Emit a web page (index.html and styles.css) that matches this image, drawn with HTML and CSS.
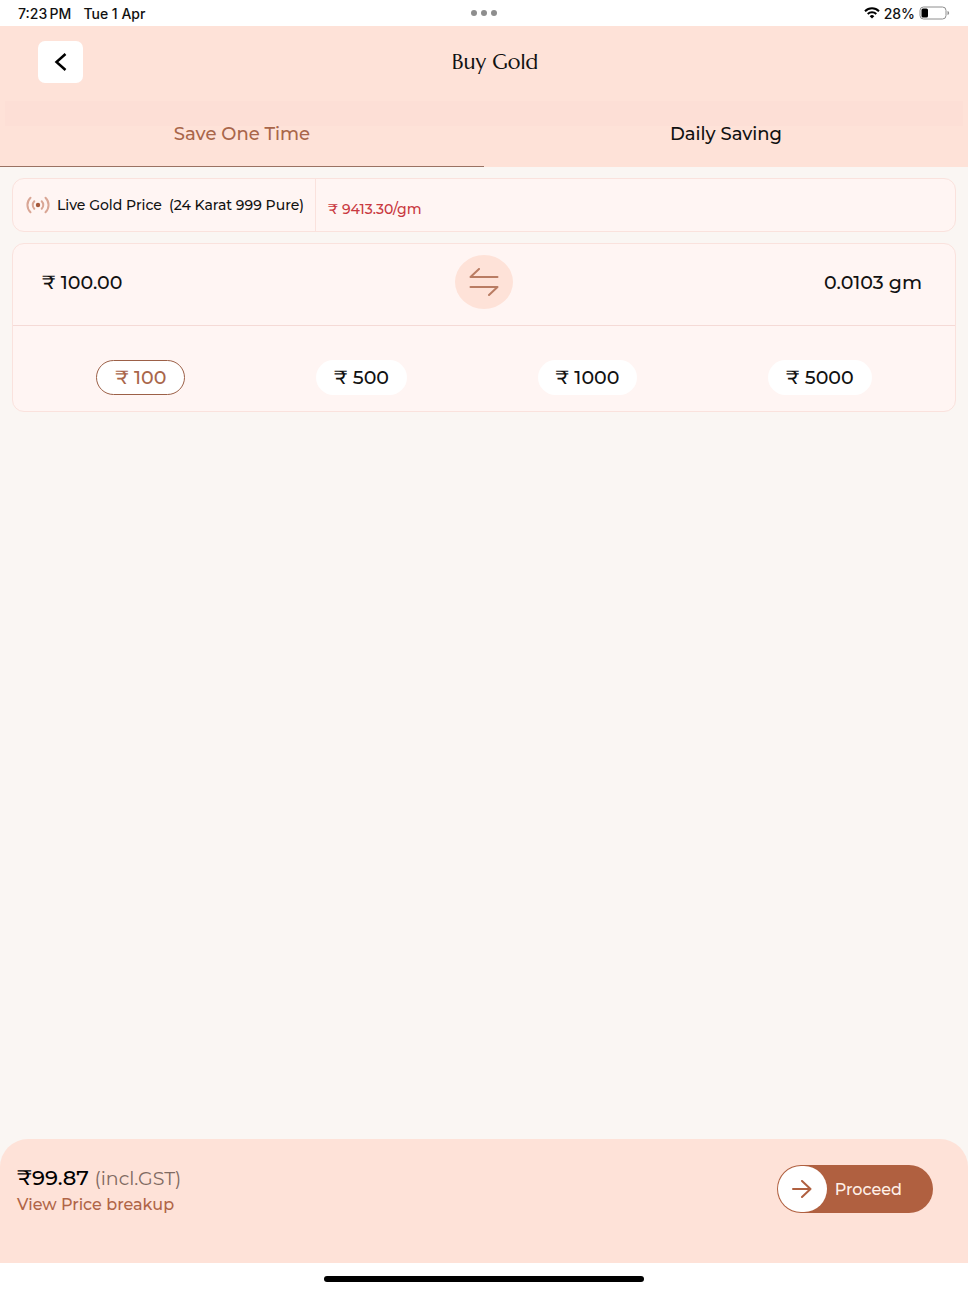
FILE: index.html
```html
<!DOCTYPE html>
<html lang="en">
<head>
  <meta charset="UTF-8">
  <meta name="viewport" content="width=device-width, initial-scale=1">
  <title>Buy Gold</title>
  <link rel="stylesheet" href="styles.css">
</head>
<body>
  <div class="status">
    <div class="status-left">
      <span>7:23&#8201;PM</span>
      <span>Tue 1 Apr</span>
    </div>
    <div class="dots"><i></i><i></i><i></i></div>
    <div class="status-right">
      <svg width="16" height="12" viewBox="0 0 16 12" fill="none" stroke="#000" stroke-width="2">
        <path d="M1 4.2a10 10 0 0 1 14 0"/>
        <path d="M3.7 7a6.2 6.2 0 0 1 8.6 0"/>
        <path d="M8 11.6 5.7 9.2a3.3 3.3 0 0 1 4.6 0z" fill="#000" stroke="none"/>
      </svg>
      <span>28%</span>
      <svg width="31" height="14" viewBox="0 0 31 14">
        <rect x="1" y="1" width="26" height="12" rx="3.5" fill="none" stroke="#8e8e8e"/>
        <rect x="2.5" y="2.5" width="6.5" height="9" rx="1.5" fill="#000"/>
        <path d="M28.5 5v4c1-.3 1.6-1.1 1.6-2s-.6-1.7-1.6-2z" fill="#8e8e8e"/>
      </svg>
    </div>
  </div>

  <header class="header">
    <button type="button" class="back" aria-label="Back">
      <svg width="14" height="20" viewBox="0 0 14 20" fill="none" stroke="#000" stroke-width="2.5">
        <path d="M11.5 2 2.5 10l9 8"/>
      </svg>
    </button>
    <h1>Buy Gold</h1>
  </header>

  <nav class="tabs">
    <button type="button" class="tab active">Save One Time</button>
    <button type="button" class="tab">Daily Saving</button>
  </nav>

  <main class="content">
    <section class="card live">
      <div class="live-label">
        <svg width="24" height="18" viewBox="0 0 24 18" fill="none" stroke="#d9a695" stroke-width="2" stroke-linecap="round">
          <circle cx="12" cy="9" r="2.2" fill="#a4593c" stroke="none"/>
          <path d="M8.3 5.2a5.4 5.4 0 0 0 0 7.6M15.7 5.2a5.4 5.4 0 0 1 0 7.6"/>
          <path d="M4.5 1.8a10 10 0 0 0 0 14.4M19.5 1.8a10 10 0 0 1 0 14.4"/>
        </svg>
        <span>Live Gold Price</span>
        <span>(24 Karat 999 Pure)</span>
      </div>
      <div class="live-price">₹ 9413.30/gm</div>
    </section>

    <section class="card">
      <div class="convert">
        <span>₹ 100.00</span>
        <button type="button" class="swap" aria-label="Swap">
          <svg width="30" height="28" viewBox="0 0 30 28" fill="none" stroke="#b97c63" stroke-width="2" stroke-linecap="round" stroke-linejoin="round">
            <path d="M28.5 9H1.5L10 1"/>
            <path d="M1.5 19h27L20 27"/>
          </svg>
        </button>
        <span class="grams">0.0103 gm</span>
      </div>
      <div class="amounts">
        <button type="button" class="amount selected">₹ 100</button>
        <button type="button" class="amount">₹ 500</button>
        <button type="button" class="amount">₹ 1000</button>
        <button type="button" class="amount">₹ 5000</button>
      </div>
    </section>
  </main>

  <footer class="footer">
    <div>
      <p class="total">₹99.87 <span>(incl.GST)</span></p>
      <a href="#" class="breakup">View Price breakup</a>
    </div>
    <button type="button" class="proceed">
      <span class="knob">
        <svg width="20" height="18" viewBox="0 0 20 18" fill="none" stroke="#b06040" stroke-width="2" stroke-linecap="round" stroke-linejoin="round">
          <path d="M1 9h17.5M10 1l8.500 8-8.500 8"/>
        </svg>
      </span>
      Proceed
    </button>
  </footer>
  <div class="home"><div class="home-bar"></div></div>
</body>
</html>
```
FILE: styles.css
```css
* {
  box-sizing: border-box;
}
body {
  display: flex;
  flex-direction: column;
  min-height: 100vh;
  margin: 0;
  background: #faf6f3;
  color: #111;
  font-family: Montserrat, Inter, sans-serif;
  font-weight: 500;
}
button {
  padding: 0;
  border: none;
  background: none;
  color: inherit;
  font: inherit;
  cursor: pointer;
}
.status {
  display: grid;
  grid-template-columns: 1fr auto 1fr;
  align-items: center;
  height: 26px;
  padding: 0 18px;
  background: #fff;
  font-family: Inter, sans-serif;
  font-size: 14px;
}
.status-left {
  display: flex;
  gap: 12px;
}
.status-right {
  display: flex;
  align-items: center;
  justify-content: flex-end;
  gap: 4px;
}
.dots {
  display: flex;
  gap: 4px;
}
.dots i {
  width: 6px;
  height: 6px;
  border-radius: 50%;
  background: #8e8e8e;
}
.header {
  display: grid;
  grid-template-columns: 1fr auto 1fr;
  align-items: center;
  height: 75px;
  padding: 0 16px 4px 38px;
  background: #fee2d8;
}
.back {
  display: flex;
  align-items: center;
  justify-content: center;
  width: 45px;
  height: 42px;
  border-radius: 7px;
  background: #fff;
}
h1 {
  margin: 0;
  font-family: Marcellus, Lato, sans-serif;
  font-size: 21px;
  font-weight: 400;
}
.tabs {
  display: grid;
  grid-template-columns: 1fr 1fr;
  height: 66px;
  background: #fee2d8 linear-gradient(#fddfd6, #fddfd6) top / calc(100% - 10px) 25px no-repeat;
}
.tab {
  border-bottom: 1px solid transparent;
  font-size: 18px;
}
.active {
  border-color: #9a7263;
  color: #a9664a;
}
.content {
  display: flex;
  flex: 1;
  flex-direction: column;
  gap: 11px;
  padding: 11px 12px;
}
.card {
  border: 1px solid #fae2dd;
  border-radius: 12px;
  background: #fff5f3;
}
.live {
  display: flex;
  height: 54px;
}
.live-label {
  display: flex;
  align-items: center;
  gap: 7px;
  padding: 0 11px 0 13px;
  border-right: 1px solid #fae2dd;
  font-size: 14px;
}
.live-price {
  padding: 21px 12px 0;
  color: #c9393f;
  font-size: 14px;
}
.convert {
  display: grid;
  grid-template-columns: 1fr auto 1fr;
  align-items: center;
  height: 82px;
  padding: 0 29px 5px;
  border-bottom: 1px solid #f5dad6;
  font-size: 19px;
}
.swap {
  display: flex;
  align-items: center;
  justify-content: center;
  width: 58px;
  height: 54px;
  border-radius: 50%;
  background: #fee2d8;
}
.grams {
  padding-right: 4px;
  text-align: right;
}
.amounts {
  display: flex;
  justify-content: space-around;
  padding: 34px 18px 16px;
}
.amount {
  height: 35px;
  padding: 0 18px;
  border-radius: 18px;
  background: #fff;
  font-size: 19px;
}
.selected {
  border: 1px solid #9c6047;
  color: #a9664a;
}
.footer {
  display: flex;
  align-items: flex-start;
  justify-content: space-between;
  height: 124px;
  padding: 26px 35px 0 17px;
  border-radius: 28px 28px 0 0;
  background: #fee2d8;
}
.total {
  margin: 0;
  color: #000;
  font-size: 21px;
  line-height: 26px;
}
.total span {
  color: #806a62;
  font-size: 19px;
  font-weight: 400;
}
.breakup {
  color: #b06547;
  font-size: 16px;
  line-height: 26px;
  text-decoration: none;
}
.proceed {
  display: flex;
  align-items: center;
  gap: 8px;
  height: 48px;
  padding: 0 31px 0 1px;
  border-radius: 24px;
  background: #b06040;
  color: #fff0e8;
  font-size: 16px;
}
.knob {
  display: flex;
  align-items: center;
  justify-content: center;
  width: 49px;
  height: 46px;
  border-radius: 23px;
  background: #fff;
}
.home {
  display: flex;
  justify-content: center;
  height: 27px;
  padding-top: 13px;
  background: #fff;
}
.home-bar {
  width: 33%;
  height: 6px;
  border-radius: 3px;
  background: #000;
}
```
